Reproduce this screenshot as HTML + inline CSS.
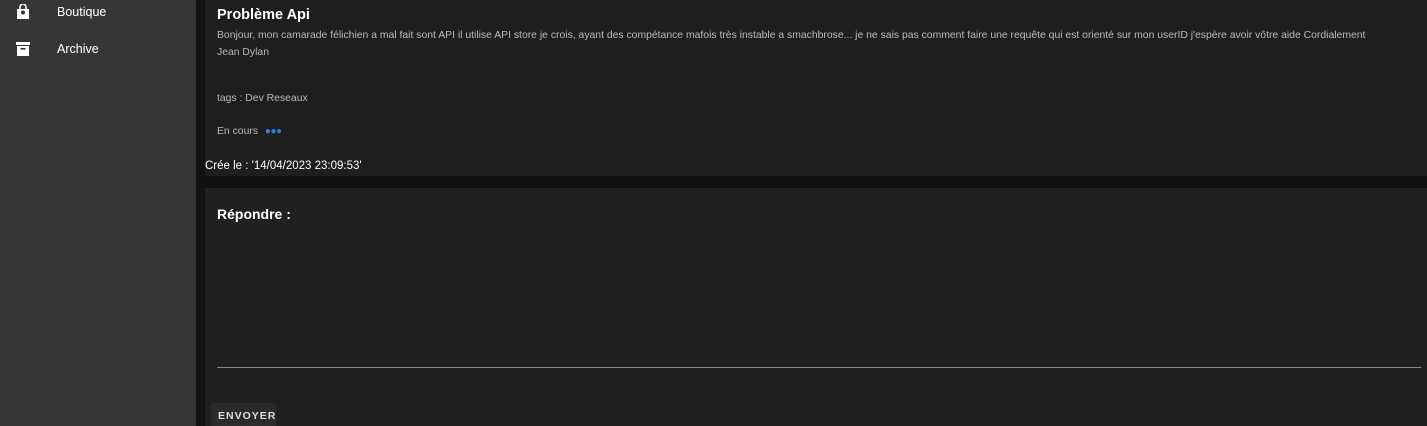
<!DOCTYPE html>
<html><head><meta charset="utf-8"><style>
html,body{margin:0;width:1427px;height:426px;overflow:hidden}
body{background:#121212;font-family:"Liberation Sans",sans-serif;position:relative}
.side{position:absolute;left:0;top:0;width:196px;height:426px;background:#363636}
.item{position:absolute;left:57px;color:#fff;font-size:12.5px}
.ic{position:absolute;left:16px}
.card{position:absolute;left:205px;right:0;background:#1e1e1e;overflow:hidden}
.t{position:absolute;color:#bbb;font-size:10.4px;line-height:17px}
</style></head><body>
<div class="side">
<svg class="ic" style="top:4px" width="14" height="16" viewBox="0 0 14 16"><path d="M1 5h12v10H1z" fill="#fff"/><path d="M4 5V3a3 3 0 0 1 6 0v2" stroke="#fff" stroke-width="1.6" fill="none"/><circle cx="7" cy="8.5" r="2" fill="#363636"/></svg>
<div class="item" style="top:5px">Boutique</div>
<svg class="ic" style="top:42px" width="14" height="14" viewBox="0 0 14 14"><rect x="0" y="0" width="14" height="3" fill="#fff"/><rect x="1" y="4" width="12" height="10" fill="#fff"/><rect x="4.5" y="6" width="5" height="1.6" fill="#363636"/></svg>
<div class="item" style="top:42px">Archive</div>
</div>
<div class="card" style="top:0;height:176px">
<div style="position:absolute;left:12px;top:7px;color:#fff;font-size:14.5px;font-weight:bold">Problème Api</div>
<div class="t" style="left:12px;top:27px;right:10px">Bonjour, mon camarade félichien a mal fait sont API il utilise API store je crois, ayant des compétance mafois très instable a smachbrose... je ne sais pas comment faire une requête qui est orienté sur mon userID j'espère avoir vôtre aide Cordialement<br>Jean Dylan</div>
<div class="t" style="left:12px;top:90px">tags : Dev Reseaux</div>
<div class="t" style="left:12px;top:123px">En cours <span style="color:#2f7de1;font-size:10px;letter-spacing:-0.5px;margin-left:4px">●●●</span></div>
<div style="position:absolute;left:0;top:160px;color:#fff;font-size:11.5px">Crée le : '14/04/2023 23:09:53'</div>
</div>
<div class="card" style="top:188px;height:238px;background:#202020">
<div style="position:absolute;left:12px;top:18px;color:#fff;font-size:14px;font-weight:bold">Répondre :</div>
<div style="position:absolute;left:12px;top:179px;width:1204px;height:1px;background:#8a8a8a"></div>
<div style="position:absolute;left:6px;top:215px;width:65px;height:30px;background:#2b2b2b;border-radius:3px;color:#ddd;font-size:10.5px;font-weight:bold;letter-spacing:1px;padding:7px 0 0 7px;box-sizing:border-box">ENVOYER</div>
</div>
</body></html>
